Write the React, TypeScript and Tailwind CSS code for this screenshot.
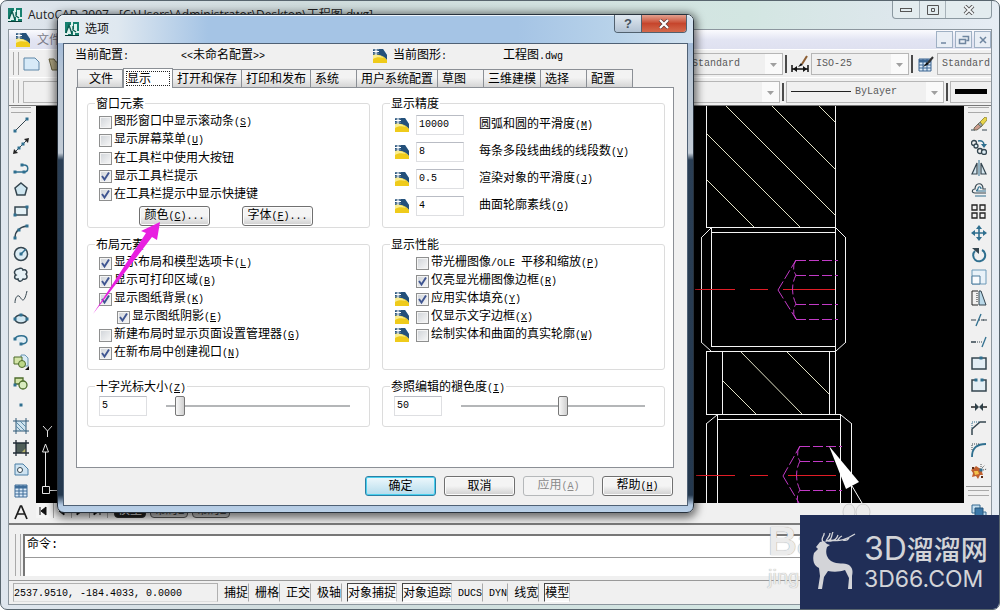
import React, { useState } from 'react';

const CJK = "font-['Liberation_Sans','Noto_Sans_CJK_SC',sans-serif]";

// Latin runs are set in the half-width mono face next to the full-width characters
const Txt: React.FC<{ text: string; hotkey?: string }> = ({ text, hotkey }) => (
    <span className="whitespace-pre">
        {text.split(/([\x20-\x7e]+)/).map((part, i) =>
            i % 2 ? (
                <span key={i} className="font-['Liberation_Mono',monospace] text-[10px]">{part}</span>
            ) : part
        )}
        {hotkey && (
            <span className="font-['Liberation_Mono',monospace] text-[10px]">(<u>{hotkey}</u>)</span>
        )}
    </span>
);

const AcadIcon = () => (
    <svg viewBox="0 0 14 14" className="size-3.5 shrink-0">
        <rect width="14" height="14" fill="#dff3ee" />
        <path d="M0 0h6v3H4v3H2v5H0zM8 0h6v9h-2V2H9v5H8zM3 12h3V9h2v5H3zM10 11h4v3h-4z" fill="#16806f" />
        <path d="M1 11L4 3l3 9M8 4v4l3 2" stroke="#0b5a4e" strokeWidth="1.3" fill="none" />
        <path d="M0 13.5h14" stroke="#063f38" />
    </svg>
);

const DwgIcon = () => (
    <svg viewBox="0 0 16 16" className="size-4 shrink-0">
        <path d="M1 1h10l4 6v8H1z" fill="#8fbfe0" />
        <path d="M2 1h9l4 6v5C12 8 8 6 1 7V1z" fill="#24507a" />
        <path d="M1 7c6-1 11 1 14 5v3H1z" fill="#efcb1b" />
        <path d="M1 7c5-1 8 1 11 3-4-1-8-1-11 1z" fill="#faed90" />
        <path d="M4 0v7M1 3.500h6" stroke="#fff" strokeWidth="1.200" />
        <path d="M2 1.500l1 1M6 1.500l-1 1M2 5.500l1-1M6 5.500l-1-1" stroke="#fff" />
    </svg>
);

const TEAL = '#2f6f8f';
const DARK = '#34454f';

const Dot = ({ x, y }: { x: number; y: number }) => <rect x={x - 1.5} y={y - 1.5} width="3" height="3" fill={TEAL} />;

const DRAW_TOOLS: [string, React.ReactNode][] = [
    ['直线', <><path d="M2 14L14 2" stroke={DARK} /><Dot x={2} y={14} /><Dot x={14} y={2} /></>],
    ['构造线', <><path d="M1 15L15 1" stroke={DARK} /><path d="M0 16l1-5 4 4zM16 0l-5 1 4 4z" fill="#222" /><Dot x={6} y={10} /><Dot x={10} y={6} /></>],
    ['多段线', <><path d="M2 12h9c5 0 5-7 0-7H9" stroke={TEAL} strokeWidth="1.5" /><Dot x={2} y={12} /><Dot x={11} y={12} /><Dot x={9} y={5} /></>],
    ['正多边形', <path d="M8 2l6 5-2 7H4L2 7z" stroke={DARK} strokeWidth="1.5" fill="#cfe6f0" />],
    ['矩形', <><path d="M2 4h12v8H2z" stroke={DARK} strokeWidth="1.5" fill="#e3f0f5" /><Dot x={2} y={12} /><Dot x={14} y={4} /></>],
    ['圆弧', <><path d="M2 14C2 8 6 3 14 2" stroke={DARK} strokeWidth="1.5" /><Dot x={2} y={14} /><Dot x={6} y={6} /><Dot x={14} y={2} /></>],
    ['圆', <><circle cx="8" cy="8" r="6.500" stroke={DARK} strokeWidth="1.5" fill="#dcecf4" /><path d="M8 8l5-5" stroke={TEAL} strokeWidth="1.500" /><Dot x={8} y={8} /></>],
    ['修订云线', <path d="M5 2c3-2 5 0 5 1 3-1 5 2 3 4 2 3 1 6-3 5-2 4-5 2-5 0-4 1-4-3-2-4C0 6 2 2 5 2z" stroke={DARK} strokeWidth="1.500" fill="#e6f1f6" />],
    ['样条曲线', <path d="M2 14C2 8 5 5 7 8s4 7 7-6" stroke={DARK} />],
    ['椭圆', <><ellipse cx="8" cy="8" rx="6" ry="4" stroke={DARK} strokeWidth="1.500" fill="#cfe6f0" /><Dot x={2} y={8} /><Dot x={14} y={8} /><Dot x={8} y={4} /></>],
    ['椭圆弧', <><path d="M2 7c1-4 12-5 12 1 0 3-3 4-6 4" stroke={TEAL} strokeWidth="1.500" fill="#e1edf3" /><Dot x={2} y={7} /><Dot x={8} y={12} /></>],
    ['插入块', <><path d="M8 1h4l3 3v8H8z" fill="#d9ebf6" stroke="#6b97b3" /><path d="M1 3h8v7H1z" fill="#d4e5a8" stroke="#4c6b2b" /><circle cx="9" cy="10" r="3.500" fill="#bcd98a" stroke="#4c6b2b" /><path d="M16 12v4h-4z" fill="#111" /></>],
    ['创建块', <><path d="M2 3h8v6H2z" fill="#d4e5a8" stroke="#4c6b2b" strokeWidth="1.300" /><circle cx="10" cy="10" r="4" fill="#d9ebc0" stroke="#4c6b2b" strokeWidth="1.300" /><Dot x={2} y={10} /></>],
    ['点', <Dot x={8} y={8} />],
    ['图案填充', <><path d="M3 3h10v10H3z" fill="#cfe3ee" /><path d="M3 0v16M13 0v16M0 3h16M0 13h16" stroke="#2f5876" /><path d="M3 8l5 5M3 4l9 9M7 3l6 6" stroke="#5e8ca8" /></>],
    ['渐变色', <><path d="M3 3h10v10H3z" fill="#4e5d57" /><path d="M8 13l5-5v5z" fill="#b9b56c" /><path d="M3 0v16M13 0v16M0 3h16M0 13h16" stroke="#222c36" strokeWidth="1.300" /></>],
    ['面域', <><path d="M2 3h8l5 5v6H2z" fill="#cfe3f1" stroke="#4b7fa5" /><circle cx="7" cy="9" r="2.500" fill="#fff" stroke={DARK} /></>],
    ['表格', <><path d="M2 2h12v12H2z" fill="#dceaf7" stroke="#3f6d99" /><path d="M2 4h12" stroke="#3f6d99" strokeWidth="3" /><path d="M6 2v12M10 2v12M2 8h12M2 11h12" stroke="#3f6d99" /></>],
    ['多行文字', <path d="M2 15L7.500 2h1L14 15M4 10h8" stroke="#1d1d1d" strokeWidth="1.700" />],
];

const MODIFY_TOOLS: [string, React.ReactNode][] = [
    ['删除', <><path d="M0 13h4M11 13h5" stroke={DARK} /><path d="M9 5l5-5 2 1v2l-5 6z" fill="#e8d44a" stroke="#7d7420" strokeWidth=".7" /><path d="M8 6l3 3-5 4-3 0 0-2z" fill="#c99a8b" stroke="#554" strokeWidth=".8" /><path d="M9 5l2.500 3-1.500 2-3-3z" fill="#9aa6ab" stroke="#554" strokeWidth=".6" /></>],
    ['复制', <><circle cx="3" cy="4" r="2.500" stroke={DARK} strokeWidth="1.300" /><circle cx="5" cy="7" r="2" stroke={DARK} strokeWidth="1.300" fill="#dcecf4" /><circle cx="9" cy="12" r="2.500" stroke={DARK} strokeWidth="1.300" /><circle cx="13" cy="13" r="2.500" stroke={DARK} strokeWidth="1.300" fill="#dcecf4" /><path d="M7 2c4-1 6 1 6 4" stroke={TEAL} strokeWidth="1.500" /><path d="M10 5h6l-3 4z" fill={TEAL} /></>],
    ['镜像', <><path d="M6 3v11H1zM10 3v11h5z" stroke={DARK} fill="#d5e5ee" strokeWidth="1.200" /><path d="M8 0v16" stroke={TEAL} /></>],
    ['偏移', <><path d="M15 11H4c-4 0-3-4 0-4 0-7 8-7 8 0h3" stroke={DARK} strokeWidth="1.200" /><path d="M15 14H4M15 9H6c-1 0 0-1 1-2 0-3 3-3 3 0" stroke={TEAL} strokeWidth="1.200" /></>],
    ['阵列', <path d="M1 1h5v5H1zM9 1h5v5H9zM1 9h5v5H1zM9 9h5v5H9z" stroke="#222" strokeWidth="1.300" />],
    ['移动', <><path d="M8 2v12M2 8h12" stroke={TEAL} strokeWidth="1.600" /><path d="M8 0l3 4H5zM8 16l3-4H5zM0 8l4-3v6zM16 8l-4-3v6z" fill={TEAL} /></>],
    ['旋转', <><path d="M4 4a6 6 0 1 0 7-1" stroke={TEAL} strokeWidth="2" /><path d="M1 1h7v6z" fill={DARK} /></>],
    ['缩放', <><path d="M1 1h14v14H1z" stroke="#6d9ab8" fill="#e9f2f8" /><path d="M1 7h8v8H1z" stroke="#4b7b9b" fill="#f9fbfd" /></>],
    ['拉伸', <><path d="M8 1h2l5 14H8z" fill="#b9d8e8" stroke={DARK} /><path d="M7 1H1v14h6" stroke="#222" /><path d="M6 3v10" stroke="#222" strokeDasharray="1 1" /></>],
    ['修剪', <><path d="M0 8h5M11 8h5" stroke={DARK} /><path d="M5 14L10 2" stroke={TEAL} strokeWidth="1.300" /><path d="M8 8h6" stroke={DARK} strokeDasharray="1 1" /></>],
    ['延伸', <><path d="M0 8h5" stroke={DARK} strokeWidth="1.500" /><path d="M6 8h6" stroke={DARK} strokeDasharray="1 1" /><path d="M11 13L15 3" stroke={TEAL} strokeWidth="1.300" /></>],
    ['打断于点', <><path d="M1 3h14v11H1z" stroke={DARK} strokeWidth="1.500" fill="#e3eef5" /><Dot x={10} y={3} /></>],
    ['打断', <><path d="M5 3H1v11h14V3h-4" stroke={DARK} strokeWidth="1.500" fill="#e3eef5" /><Dot x={5} y={3} /><Dot x={11} y={3} /></>],
    ['合并', <><path d="M0 8h5M11 8h5" stroke="#222" strokeWidth="1.500" /><path d="M4 4l4 4-4 4zM12 4L8 8l4 4z" fill="#2f4048" /></>],
    ['倒角', <><path d="M1 15V9l8-7h6" stroke={DARK} strokeWidth="1.500" /><path d="M1 8V2h7" stroke={TEAL} strokeDasharray="1 1" /></>],
    ['圆角', <><path d="M1 15C1 6 6 2 15 2" stroke={TEAL} strokeWidth="1.800" /><path d="M1 8V2h7" stroke={DARK} strokeDasharray="1 1" /></>],
    ['分解', <><path d="M0 6l3-2 2-2 3 2 3 1 0 3 1 3-3 0-2 4-2-3-4 1 1-4z" fill="#c0602f" /><path d="M3 7l4 0 1 3-4 1z" fill="#f3c34b" /><path d="M1 3h2v2H1zM10 12h2v2h-2z" fill="#5a2c18" /><Dot x={10} y={6} /><path d="M11 4l3-3M12 6l4-1M10 3V0" stroke="#555" strokeDasharray="1 1" /></>],
];

const ORDER_TOOL: [string, React.ReactNode] = [
    '前置', <><path d="M1 1h8v8H1zM8 8h7v7H8z" fill="#c5dff0" stroke="#376a91" /><path d="M4 4h8v8H4z" fill="#3c78a8" stroke="#27567c" /></>,
];

const Tool: React.FC<{ tool: [string, React.ReactNode] }> = ({ tool: [name, drawing] }) => (
    <button aria-label={name} className="flex flex-1 w-full min-h-0 items-center justify-center">
        <svg viewBox="0 0 16 16" fill="none" className="size-4">{drawing}</svg>
    </button>
);

const GripH = () => <div className="h-1.5 mx-0.5 my-px border-y border-[#a9a9a9] shrink-0" />;
const GripV = () => <div className="w-1.5 self-stretch border-x border-[#a9a9a9] shrink-0" />;
const Divider = () => <div className="w-0.5 h-[18px] mx-0.5 bg-[#4a4a4a] shrink-0" />;

const Combo: React.FC<{ label: string; value: string; className: string; children?: React.ReactNode }> = ({ label, value, className, children }) => (
    <div className={`relative h-[22px] border border-[#b6b6b6] bg-[#f0f0f0] flex items-center overflow-hidden ${className}`}>
        {children}
        <select aria-label={label} className="flex-1 min-w-0 h-full pl-1 appearance-none font-['Liberation_Mono',monospace] text-[10px] text-[#5a5a5a] bg-transparent">
            <option>{value}</option>
        </select>
        <svg viewBox="0 0 17 20" className="h-full w-[17px] shrink-0 bg-[#fafafa] pointer-events-none">
            <path d="M5 9h7l-3.500 4z" fill="#a0a0a0" />
        </svg>
    </div>
);

const Drawing = () => (
    <svg viewBox="35 106 930 397" preserveAspectRatio="xMaxYMin slice" fill="none" className="block w-full h-full">
        <g stroke="#e2e2c6" strokeWidth="1">
            <path d="M727 106l109 109M773 106l63 63M820 106l16 16M707 133l95 95M707 179l49 49" />
            <path d="M723 380l34 34M742 352l61 62M788 352l43 43" />
        </g>
        <g stroke="#f4f4f4" strokeWidth="1">
            <path d="M707.500 106v122M836.500 106v308M707 227.500h130" />
            <path d="M712.500 228v119M702.500 238v104M846.500 238v104M712 228l-10 10M837 228l10 10M702 342l10 9M847 342l-10 9" />
            <path d="M712 232.500h125M712 346.500h125M707 351.500h130M707 414.500h135" />
            <path d="M707.500 351v64M723.500 351v64M830.500 351v64" />
            <path d="M718 415l-11 9M842 415l11 9M707.500 424v79M718.500 415v88M841.500 415v88M852.500 424v79M718 419.500h124" />
        </g>
        <path d="M696 289.500h40M751 289.500h18M784 289.500h52M697 475.500h39M751 475.500h18M789 475.500h48" stroke="#e01c26" strokeWidth="1" />
        <g stroke="#c23ac6" strokeWidth="1" strokeDasharray="10 3">
            <path d="M797 260.500h42M797 275.500h42M797 304.500h42M797 319.500h42" />
            <path d="M779 290l18-30M779 290l18 29M797 260q-5 8 0 15q-7 14 0 29q-5 8 0 15" />
            <path d="M801 446.500h42M801 461.500h34M801 490.500h42" />
            <path d="M784 476l17-30M784 476l16 27M801 446q-5 8 0 15q-7 14 0 29q-4 6-2 13" />
        </g>
        <path d="M830 446l30 36-13 7z" fill="#fff" />
        <path d="M853 486l10 17" stroke="#fff" />
        <g stroke="#e8e8e8">
            <path d="M46.500 452v34M43.500 486.500h7v7h-7zM50 490.500h10M46.500 444l-3 8h6z" />
            <path d="M44 426l4.500 5 4.500-5M48.500 431v6" />
        </g>
    </svg>
);

const Check: React.FC<{ text: string; hotkey?: string; on?: boolean; className?: string }> = ({ text, hotkey, on = false, className = '' }) => {
    const [checked, setChecked] = useState(on);
    return (
        <label className={`flex items-center gap-0.5 h-[18px] ${className}`}>
            <span className="relative size-[13px] shrink-0">
                <input
                    type="checkbox"
                    checked={checked}
                    onChange={() => setChecked(!checked)}
                    className="peer block size-[13px] appearance-none border border-[#8e8f8f] bg-linear-to-br from-[#cfd3d8] to-[#f8f8f8] shadow-[inset_0_0_0_1px_#f4f4f4]"
                />
                <svg viewBox="0 0 13 13" className="absolute inset-0 hidden peer-checked:block pointer-events-none">
                    <path d="M3 6l2.500 3.500L10 2.500" stroke="#3f5591" strokeWidth="1.900" fill="none" />
                </svg>
            </span>
            <Txt text={text} hotkey={hotkey} />
        </label>
    );
};

const Group: React.FC<{ title: string; hotkey?: string; className: string; children: React.ReactNode }> = ({ title, hotkey, className, children }) => (
    <fieldset className={`min-w-0 border border-[#dcdcdc] rounded-[3px] px-[11px] pt-[3px] ${className}`}>
        <legend className="-ml-1 px-px h-3.5 leading-4"><Txt text={title} hotkey={hotkey} /></legend>
        {children}
    </fieldset>
);

const BTN = 'h-5 w-[71px] rounded-[3px] border flex items-center justify-center';
const BTN_NORMAL = 'border-[#707070] bg-linear-to-b from-[#f4f4f4] from-50% to-[#cfcfcf] shadow-[inset_0_0_0_1px_#fcfcfc]';
const FIELD = "w-12 h-5 border border-[#dedfe2] border-t-[#b9bcc4] bg-white pl-0.5 pb-0.5 font-['Liberation_Mono',monospace] text-[10px] leading-4";
const SLIDER =
    'appearance-none w-[184px] h-5 bg-transparent [&::-webkit-slider-runnable-track]:h-0.5 [&::-webkit-slider-runnable-track]:bg-[#b4b6b8] ' +
    '[&::-webkit-slider-thumb]:appearance-none [&::-webkit-slider-thumb]:w-2.5 [&::-webkit-slider-thumb]:h-5 [&::-webkit-slider-thumb]:-mt-[9px] ' +
    '[&::-webkit-slider-thumb]:rounded-xs [&::-webkit-slider-thumb]:border [&::-webkit-slider-thumb]:border-[#777] [&::-webkit-slider-thumb]:bg-linear-to-r ' +
    '[&::-webkit-slider-thumb]:from-[#f8f8f8] [&::-webkit-slider-thumb]:to-[#cfcfcf]';

const TABS = ['文件', '显示', '打开和保存', '打印和发布', '系统', '用户系统配置', '草图', '三维建模', '选择', '配置'];

const PRECISION = [
    { id: 'arc', value: '10000', text: '圆弧和圆的平滑度', hotkey: 'M' },
    { id: 'seg', value: '8', text: '每条多段线曲线的线段数', hotkey: 'V' },
    { id: 'render', value: '0.5', text: '渲染对象的平滑度', hotkey: 'J' },
    { id: 'contour', value: '4', text: '曲面轮廓素线', hotkey: 'O' },
];

const PERFORMANCE = [
    { text: '带光栅图像/OLE 平移和缩放', hotkey: 'P', on: false, dwg: false },
    { text: '仅亮显光栅图像边框', hotkey: 'R', on: true, dwg: false },
    { text: '应用实体填充', hotkey: 'Y', on: true, dwg: true },
    { text: '仅显示文字边框', hotkey: 'X', on: false, dwg: true },
    { text: '绘制实体和曲面的真实轮廓', hotkey: 'W', on: false, dwg: true },
];

const ValueSlider: React.FC<{ label: string; initial: number; max: number }> = ({ label, initial, max }) => {
    const [value, setValue] = useState(initial);
    return (
        <div className="flex items-center gap-[19px]">
            <input aria-label={label} className={FIELD} value={value} onChange={(e) => setValue(Number(e.target.value) || 0)} />
            <input aria-label={label} type="range" min={0} max={max} value={value} onChange={(e) => setValue(Number(e.target.value))} className={SLIDER} />
        </div>
    );
};

const OptionsDialog = () => (
    <div
        role="dialog"
        aria-label="选项"
        className="absolute left-14 top-[13px] w-[637px] rounded-[7px] border border-[#28323d] shadow-[0_2px_9px_3px_rgba(0,0,0,0.55)] bg-[linear-gradient(180deg,#d5e3ef_0px,#a9c8e8_14px,#a2bad8_27px,#b9c6d4_60px,#c3ccd6_138px,#2b3f55_145px,#24384e_480px,#b4cae2_490px,#b9d0e8_100%)]"
    >
        <div className="h-7 pl-[7px] flex items-center gap-1.5 rounded-t-md bg-[linear-gradient(90deg,#e7edf2_0px,#dfe8f0_60px,#a5c4e5_150px,#a5c4e5_460px,#b9d3ea_560px,#d2e2f0_100%)] shadow-[inset_0_1px_0_#eef5fb]">
            <AcadIcon />
            <h2 className="text-[12px] text-[#111]">选项</h2>
            <div className="ml-auto mr-1.5 self-start flex h-[18px] rounded-b-sm border border-t-0 border-[#51616f] overflow-hidden">
                <button aria-label="帮助" className="w-[27px] flex items-center justify-center bg-linear-to-b from-[#e0e8f0] to-[#b2c2d3] border-r border-[#51616f] text-[13px] leading-4 font-bold text-[#47525d]">?</button>
                <button aria-label="关闭" className="w-11 flex items-center justify-center bg-linear-to-b from-[#e2a08f] via-[#c6452c] to-[#d4694c]">
                    <svg viewBox="0 0 12 10" className="w-3 h-2.5"><path d="M2 1l8 8M10 1L2 9" stroke="#5c3a3a" strokeWidth="3.600" /><path d="M2 1l8 8M10 1L2 9" stroke="#fff" strokeWidth="2.200" /></svg>
                </button>
            </div>
        </div>
        <div className="mx-[5px] mb-1.5 border border-[#4f6175] bg-[#f0f0f0]">
            <div className="h-6 pl-[11px] grid grid-cols-[106px_191px_21px_110px_1fr] items-center">
                <Txt text="当前配置:" />
                <Txt text="<<未命名配置>>" />
                <DwgIcon />
                <Txt text="当前图形:" />
                <Txt text="工程图.dwg" />
            </div>
            <div role="tablist" className="pl-[13px] flex items-end h-[19px]">
                {TABS.map((tab) => {
                    const selected = tab === '显示';
                    return (
                        <button
                            key={tab}
                            role="tab"
                            aria-selected={selected}
                            className={
                                selected
                                    ? 'relative w-[50px] h-5 -mb-px p-0.5 border border-b-0 border-[#8b8f95] bg-white'
                                    : 'min-w-[46px] h-[18px] px-1 first:pl-[11px] text-left leading-4 border border-b-0 border-l-0 first:border-l border-[#8b8f95] bg-linear-to-b from-[#f3f3f3] from-45% to-[#d5d5d5]'
                            }
                        >
                            {selected ? <span className="block h-[15px] leading-[14px] text-left border border-dotted border-[#222]">{tab}</span> : tab}
                        </button>
                    );
                })}
            </div>
            <div role="tabpanel" className="ml-3 mr-[13px] pl-2.5 pr-2 pt-2 pb-10 grid grid-cols-2 gap-x-3 gap-y-[9px] bg-white border border-[#8b8f95]">
                <Group title="窗口元素" className="min-h-[132px]">
                    <Check text="图形窗口中显示滚动条" hotkey="S" />
                    <Check text="显示屏幕菜单" hotkey="U" />
                    <Check text="在工具栏中使用大按钮" />
                    <Check text="显示工具栏提示" on />
                    <Check text="在工具栏提示中显示快捷键" on />
                    <div className="flex gap-8 pl-10 pt-[3px]">
                        <button className={`${BTN} ${BTN_NORMAL}`}><Txt text="颜色" hotkey="C" /><Txt text="..." /></button>
                        <button className={`${BTN} ${BTN_NORMAL}`}><Txt text="字体" hotkey="F" /><Txt text="..." /></button>
                    </div>
                </Group>
                <Group title="显示精度" className="min-h-[132px]">
                    <div className="flex flex-col gap-[7px] pt-0.5">
                        {PRECISION.map((row) => (
                            <div key={row.id} className="flex items-center h-5">
                                <DwgIcon />
                                <input id={row.id} defaultValue={row.value} className={`${FIELD} ml-1.5 mr-[15px]`} />
                                <label htmlFor={row.id}><Txt text={row.text} hotkey={row.hotkey} /></label>
                            </div>
                        ))}
                    </div>
                </Group>
                <Group title="布局元素" className="min-h-[133px]">
                    <Check text="显示布局和模型选项卡" hotkey="L" on />
                    <Check text="显示可打印区域" hotkey="B" on />
                    <Check text="显示图纸背景" hotkey="K" on />
                    <Check text="显示图纸阴影" hotkey="E" on className="pl-[18px]" />
                    <Check text="新建布局时显示页面设置管理器" hotkey="G" />
                    <Check text="在新布局中创建视口" hotkey="N" on />
                </Group>
                <Group title="显示性能" className="min-h-[133px]">
                    {PERFORMANCE.map((row) => (
                        <div key={row.hotkey} className="flex items-center gap-1.5">
                            <div className="w-4">{row.dwg && <DwgIcon />}</div>
                            <Check text={row.text} hotkey={row.hotkey} on={row.on} />
                        </div>
                    ))}
                </Group>
                <Group title="十字光标大小" hotkey="Z" className="min-h-12">
                    <ValueSlider label="十字光标大小" initial={5} max={100} />
                </Group>
                <Group title="参照编辑的褪色度" hotkey="I" className="min-h-12">
                    <ValueSlider label="参照编辑的褪色度" initial={50} max={90} />
                </Group>
            </div>
            <div className="flex justify-end gap-2 pt-2 pb-[9px] pr-3.5">
                <button className={`${BTN} border-[#2b7fa5] bg-linear-to-b from-[#eef8fc] to-[#b5dcec] shadow-[inset_0_0_0_1px_#4ad0ee]`}>确定</button>
                <button className={`${BTN} ${BTN_NORMAL}`}>取消</button>
                <button disabled className={`${BTN} border-[#b5b8ba] bg-[#f4f4f4] text-[#8a8a8a]`}><Txt text="应用" hotkey="A" /></button>
                <button className={`${BTN} ${BTN_NORMAL}`}><Txt text="帮助" hotkey="H" /></button>
            </div>
        </div>
    </div>
);

const STATUS = ['捕捉', '栅格', '正交', '极轴', '对象捕捉', '对象追踪', 'DUCS', 'DYN', '线宽', '模型'];
const PRESSED = ['对象捕捉', '对象追踪', '模型'];

const SiteLogo = () => (
    <div className="absolute right-0 bottom-0 w-[199px] h-[94px] bg-[#202e57] text-[#d3d4d8] flex items-center pl-3 gap-2">
        <svg viewBox="0 0 44 60" className="w-11 h-[60px] shrink-0" fill="#d3d4d8">
            <path d="M4 15L8 10l4-1 3 3 3 1-3 2c-2 6 0 11 4 14 7 4 13 1 18 4 4 3 4 7 3 11v13h-4l1-11-4-8c-5 2-12 2-17 1l-4 6-2 12H6l2-13-1-8C2 34 0 28 2 21l4-4z" />
            <path d="M11 10C8 6 13 4 12 1M14 10c0-4 4-4 4-9M15 9c6-1 4-6 6-9M16 9c8 0 9-3 10-6M18 8c10 2 17-1 25-6M25 9c3-3 2-4 5-5M31 8c4 1 6-1 6-3" stroke="#d3d4d8" strokeWidth="1.300" fill="none" />
        </svg>
        <div className="whitespace-nowrap">
            <div className="font-['Inter','Noto_Sans_CJK_SC',sans-serif] text-[27px] leading-8 font-medium">
                <span className="text-[32px] font-normal">3D</span>溜溜网
            </div>
            <div className="font-['Inter',sans-serif] text-[23px] leading-6">3D66.COM</div>
        </div>
    </div>
);

const Watermark = () => (
    <div className="absolute right-[174px] bottom-5 w-[57px] pointer-events-none font-['Liberation_Sans',sans-serif] text-[#ebebeb]">
        <div className="text-[40px] leading-[48px] font-bold [text-shadow:0_0_1px_#888]">Ba</div>
        <div className="text-[20px] leading-6 [text-shadow:0_0_1px_#999]">jing</div>
    </div>
);

const App = () => (
    <div className={`relative h-screen overflow-hidden flex flex-col px-[7px] pb-1 rounded-[7px] border border-[#58656e] text-[12px] text-black leading-4 ${CJK} bg-[linear-gradient(90deg,#dfe6ee_0%,#cfdbdc_30%,#d3e6e2_75%,#dfe7ee_92%,#e6edf4_100%)]`}>
        <header className="h-7 shrink-0 flex items-center gap-1.5">
            <AcadIcon />
            <h1 className="font-['Open_Sans','Noto_Sans_CJK_SC',sans-serif] text-[12px] text-[#222] whitespace-nowrap">AutoCAD 2007 - [C:\Users\Administrator\Desktop\工程图.dwg]</h1>
            <div className="ml-auto self-start flex h-[18px] border border-t-0 border-[#8b98a0] rounded-b-sm bg-[#e3ecef]">
                <button aria-label="最小化" className="w-[27px] flex items-center justify-center border-r border-[#a7b2b9]"><span className="w-3 h-1 border border-[#555]" /></button>
                <button aria-label="最大化" className="w-[26px] flex items-center justify-center border-r border-[#a7b2b9]">
                    <svg viewBox="0 0 12 10" className="w-3 h-2.5" fill="none"><path d="M.5.5h11v9H.5zM4.500 3.500h3v3h-3z" stroke="#555" /></svg>
                </button>
                <button aria-label="关闭窗口" className="w-[45px] flex items-center justify-center">
                    <svg viewBox="0 0 12 10" className="w-3 h-2.5"><path d="M2 1l8 8M10 1L2 9" stroke="#555" strokeWidth="3.800" /><path d="M2 1l8 8M10 1L2 9" stroke="#f4f8fa" strokeWidth="1.800" /></svg>
                </button>
            </div>
        </header>

        <div className="flex-1 min-h-0 flex flex-col border border-[#8c969e] bg-[#f0f0f0]">
            <nav className="h-[19px] shrink-0 pl-1.5 flex items-center gap-1.5 bg-linear-to-b from-[#fbfbfe] via-[#e3e5f3] to-[#dfe1f0]">
                <DwgIcon />
                <button className="text-[12px] text-[#7c7c88]">文件</button>
                <div className="ml-auto flex gap-0.5">
                    {[
                        ['还原下方', 'M3 10h5'],
                        ['还原', 'M5.500 3.500h6v4h-2M2.500 6.500h6v4h-6z'],
                        ['关闭图形', 'M4 4l6 6M10 4l-6 6'],
                    ].map(([name, d]) => (
                        <button key={name} aria-label={name} className="w-[17px] h-[17px] border border-[#9fb0c4] bg-[#e9eef5] flex items-center justify-center">
                            <svg viewBox="0 0 14 14" className="size-3.5" fill="none"><path d={d} stroke="#6f86a0" strokeWidth="1.500" /></svg>
                        </button>
                    ))}
                </div>
            </nav>

            <div className="h-7 shrink-0 flex items-center pl-1 py-0.5 border-t border-white">
                <GripV />
                <svg viewBox="0 0 17 14" className="w-[17px] h-3.5 ml-1 shrink-0"><path d="M1 1h11l4 4v8H1z" fill="#d7eaf8" stroke="#5f87a8" /></svg>
                <svg viewBox="0 0 16 16" className="size-4 ml-2 shrink-0"><path d="M1 3h5l2 3h6v8H4z" fill="#b6ac86" stroke="#67603e" /></svg>
                <div className="ml-auto flex items-center">
                    <Combo label="文字样式" value="Standard" className="w-24" />
                    <Divider />
                    <svg viewBox="0 0 18 18" className="size-[18px] mx-0.5 shrink-0" fill="none">
                        <path d="M1 10v7M17 10v7M1 14h16" stroke="#111" strokeWidth="1.500" /><path d="M2 14l4-3v6zM16 14l-4-3v6z" fill="#111" /><path d="M7 12l3-4 2 2z" fill="#111" /><path d="M11 9l5-8" stroke="#8d5f34" strokeWidth="2" />
                    </svg>
                    <Combo label="标注样式" value="ISO-25" className="w-[98px]" />
                    <Divider />
                    <svg viewBox="0 0 16 16" className="size-4 mx-[3px] shrink-0" fill="none">
                        <path d="M1 3h12v12H1z" fill="#dceaf7" stroke="#3b6591" /><path d="M1 5h12" stroke="#3b6591" strokeWidth="3" /><path d="M5 3v12M9 3v12M1 9h12M1 12h12" stroke="#3b6591" /><path d="M5 11l4-5 2 2z" fill="#111" /><path d="M10 7l5-6" stroke="#333" strokeWidth="2" />
                    </svg>
                    <div className="w-[54px] overflow-hidden"><Combo label="表格样式" value="Standard" className="w-[98px]" /></div>
                </div>
            </div>

            <div className="h-7 shrink-0 flex items-center pl-1 py-0.5 border-t border-white">
                <GripV />
                <Combo label="图层" value="" className="ml-1 flex-1" />
                <Divider />
                <Combo label="线型" value="ByLayer" className="w-[158px]">
                    <span className="ml-1 w-[60px] h-px bg-[#222] shrink-0" />
                </Combo>
                <Divider />
                <div className="w-[41px] h-[22px] border border-r-0 border-[#b6b6b6] flex items-center px-1"><span className="flex-1 h-[5px] bg-black" /></div>
            </div>

            <main className="flex-1 min-h-0 flex border-t border-[#777]">
                <aside className="w-[27px] shrink-0 flex flex-col pr-[3px]">
                    <GripH />
                    {DRAW_TOOLS.map((tool) => <Tool key={tool[0]} tool={tool} />)}
                </aside>
                <div className="flex-1 min-w-0 flex flex-col">
                    <div className="flex-1 min-h-0 bg-black"><Drawing /></div>
                    <div className="h-[15px] mb-[5px] shrink-0 flex items-stretch bg-[#f0f0f0]">
                        {['M4 3v8M10 3v8L5 7z', 'M10 3v8L5 7z', 'M5 3v8l5-4z', 'M10 3v8M4 3v8l5-4z'].map((d) => (
                            <button key={d} aria-label="滚动布局选项卡" className="w-[18px] border-r border-[#aaa] bg-[#f4f4f4]">
                                <svg viewBox="0 0 14 14" className="size-3.5"><path d={d} fill="#111" stroke="#111" /></svg>
                            </button>
                        ))}
                        <button className="ml-1.5 w-8 border border-[#333] rounded-b-sm bg-[#222] text-white leading-[13px]">模型</button>
                        <button className="ml-1 w-[38px] border border-[#555] rounded-b-sm bg-[#c9c9c9] leading-[13px] text-[#444]">布局1</button>
                        <button className="ml-1 w-[38px] border border-[#555] rounded-b-sm bg-[#c9c9c9] leading-[13px] text-[#444]">布局2</button>
                    </div>
                </div>
                <aside className="w-[27px] shrink-0 flex flex-col pl-0.5">
                    <GripH />
                    {MODIFY_TOOLS.map((tool) => <Tool key={tool[0]} tool={tool} />)}
                    <div className="my-1 pt-0.5 border-t border-[#999]"><GripH /></div>
                    <Tool tool={ORDER_TOOL} />
                </aside>
            </main>

            <div className="shrink-0 flex h-[57px] pt-[9px] pb-1 pl-1.5 gap-0.5 border-t-2 border-[#7b7b7b]">
                <GripV />
                <div className="flex-1 border-l-2 border-t-2 border-[#777] bg-white">
                    <p className="h-[22px] pl-0.5 text-[12px] leading-[17px] border-b border-[#999]">
                        <label htmlFor="command">命令<span className="font-['Liberation_Mono',monospace]">:</span></label>
                    </p>
                    <input id="command" className="block w-full h-5 pl-0.5 bg-transparent outline-none" />
                </div>
            </div>

            <footer className="shrink-0 h-6 pl-1 pt-0.5 pb-0.5 flex items-stretch gap-[5px] border-t border-[#999]">
                <output className="w-[205px] flex items-center border border-[#b0b0b0] border-b-[#ddd]"><Txt text="2537.9510, -184.4033, 0.0000" /></output>
                {STATUS.map((item) => (
                    <button
                        key={item}
                        aria-pressed={PRESSED.includes(item)}
                        className={`shrink-0 border ${PRESSED.includes(item) ? 'border-t-[#444] border-l-[#444] border-r-[#ccc] border-b-white bg-[#f8f8f8]' : 'border-transparent border-r-[#aaa]'}`}
                    >
                        <Txt text={item} />
                    </button>
                ))}
            </footer>
        </div>

        <Watermark />
        <svg viewBox="0 0 32 14" className="absolute left-[840px] top-[502px] w-8 h-3.5 pointer-events-none" fill="#ececec" stroke="#cfcfcf">
            <ellipse cx="8" cy="9" rx="6" ry="8" /><ellipse cx="22" cy="9" rx="7" ry="8" />
        </svg>
        <SiteLogo />
        <OptionsDialog />
        <svg viewBox="0 0 70 94" className="absolute left-[91px] top-[220px] w-[70px] h-[94px] pointer-events-none">
            <path d="M1 93L54 12l-5-2L68 1l-3 18-5-3z" fill="#e81fe0" />
        </svg>
    </div>
);

export default App;
